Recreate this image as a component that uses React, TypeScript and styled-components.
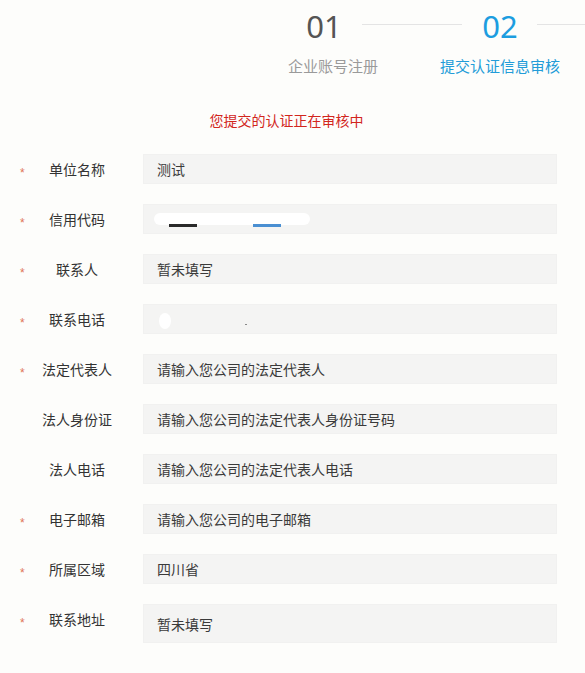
import styled, { createGlobalStyle } from 'styled-components';

const GlobalStyle = createGlobalStyle`
  html, body {
    margin: 0;
    padding: 0;
    background: #fdfdfb;
  }
  body {
    font-family: "Noto Sans CJK SC", "Noto Sans", sans-serif;
    color: #333;
  }
`;

interface FieldData {
  label: string;
  value?: string;
  required?: boolean;
  redact?: 'code' | 'phone';
  tall?: boolean;
}

const fields: FieldData[] = [
  { label: '单位名称', value: '测试', required: true },
  { label: '信用代码', required: true, redact: 'code' },
  { label: '联系人', value: '暂未填写', required: true },
  { label: '联系电话', required: true, redact: 'phone' },
  { label: '法定代表人', value: '请输入您公司的法定代表人', required: true },
  { label: '法人身份证', value: '请输入您公司的法定代表人身份证号码' },
  { label: '法人电话', value: '请输入您公司的法定代表人电话' },
  { label: '电子邮箱', value: '请输入您公司的电子邮箱', required: true },
  { label: '所属区域', value: '四川省', required: true },
  { label: '联系地址', value: '暂未填写', required: true, tall: true },
];

// masked values in the original capture
function Redaction({ kind }: { kind: 'code' | 'phone' }) {
  if (kind === 'code') {
    return (
      <svg width='414' height='30' viewBox='0 0 414 30'>
        <rect x='10' y='8' width='156' height='12' rx='6' fill='#ffffff' />
        <rect x='25' y='19' width='28' height='3' fill='#2a2a2a' />
        <rect x='109' y='19' width='28' height='3' fill='#4a8fd2' />
      </svg>
    );
  }
  return (
    <svg width='414' height='30' viewBox='0 0 414 30'>
      <ellipse cx='21' cy='16' rx='6' ry='8' fill='#ffffff' />
      <rect x='101' y='19' width='2' height='1' fill='#888' />
    </svg>
  );
}

export default function App() {
  return (
    <Page>
      <GlobalStyle />
      <StepsBar>
        <Steps>
          <StepNumber $active={false}>01</StepNumber>
          <Connector />
          <StepNumber $active>02</StepNumber>
          <Connector $tail />
          <StepCaption $active={false} $col={1} $align='start'>
            企业账号注册
          </StepCaption>
          <StepCaption $active $col={3} $align='center'>
            提交认证信息审核
          </StepCaption>
        </Steps>
      </StepsBar>

      <Notice>您提交的认证正在审核中</Notice>

      <Form>
        {fields.map((f) => (
          <Row key={f.label}>
            <Star>{f.required ? '*' : ''}</Star>
            <Label>{f.label}</Label>
            <Field $tall={!!f.tall} $bare={!!f.redact}>
              {f.redact ? <Redaction kind={f.redact} /> : f.value}
            </Field>
          </Row>
        ))}
      </Form>
    </Page>
  );
}

const Page = styled.div`
  width: 585px;
  min-height: 673px;
  padding-top: 6px;
  box-sizing: border-box;
`;

const StepsBar = styled.div`
  display: flex;
  justify-content: flex-end;
`;

const Steps = styled.div`
  display: grid;
  grid-template-columns: 72px 104px 72px 49px;
  grid-template-rows: 40px 20px;
  row-gap: 10px;
`;

const StepNumber = styled.div<{ $active: boolean }>`
  text-align: center;
  font-family: "Noto Sans", "Liberation Sans", sans-serif;
  font-size: 31px;
  line-height: 40px;
  color: ${(p) => (p.$active ? '#1c9de0' : '#555555')};
`;

const Connector = styled.div<{ $tail?: boolean }>`
  align-self: start;
  margin-top: 18px;
  margin-left: ${(p) => (p.$tail ? '1px' : '2px')};
  margin-right: ${(p) => (p.$tail ? '0' : '2px')};
  height: 1px;
  background: #e4e4e4;
`;

const StepCaption = styled.div<{ $active: boolean; $col: number; $align: string }>`
  grid-row: 2;
  grid-column: ${(p) => p.$col};
  justify-self: ${(p) => p.$align};
  white-space: nowrap;
  font-size: 15px;
  line-height: 20px;
  color: ${(p) => (p.$active ? '#229cd8' : '#9a9a9a')};
`;

const Notice = styled.div`
  margin-top: 34px;
  margin-right: 12px;
  text-align: center;
  font-size: 14px;
  line-height: 20px;
  color: #d2261d;
`;

const Form = styled.div`
  margin-top: 24px;
  display: flex;
  flex-direction: column;
  gap: 20px;
`;

const Row = styled.div`
  display: flex;
  align-items: flex-start;
  padding-left: 18px;
`;

const Star = styled.span`
  width: 22px;
  height: 30px;
  padding-left: 2px;
  box-sizing: border-box;
  font-family: "Liberation Sans", sans-serif;
  font-size: 12px;
  line-height: 38px;
  color: #e07357;
`;

const Label = styled.span`
  width: 74px;
  text-align: center;
  white-space: nowrap;
  font-size: 14px;
  line-height: 30px;
  color: #333;
`;

const Field = styled.div<{ $tall: boolean; $bare: boolean }>`
  margin-left: 29px;
  width: 414px;
  height: ${(p) => (p.$tall ? '39px' : '30px')};
  box-sizing: border-box;
  padding: ${(p) => (p.$bare ? '0' : p.$tall ? '9px 13px 0' : '4px 13px')};
  background: #f4f4f3;
  border: 1px solid #f1f1f0;
  font-size: 14px;
  line-height: 20px;
  color: #3a3a3a;
  white-space: nowrap;
  overflow: hidden;
`;
